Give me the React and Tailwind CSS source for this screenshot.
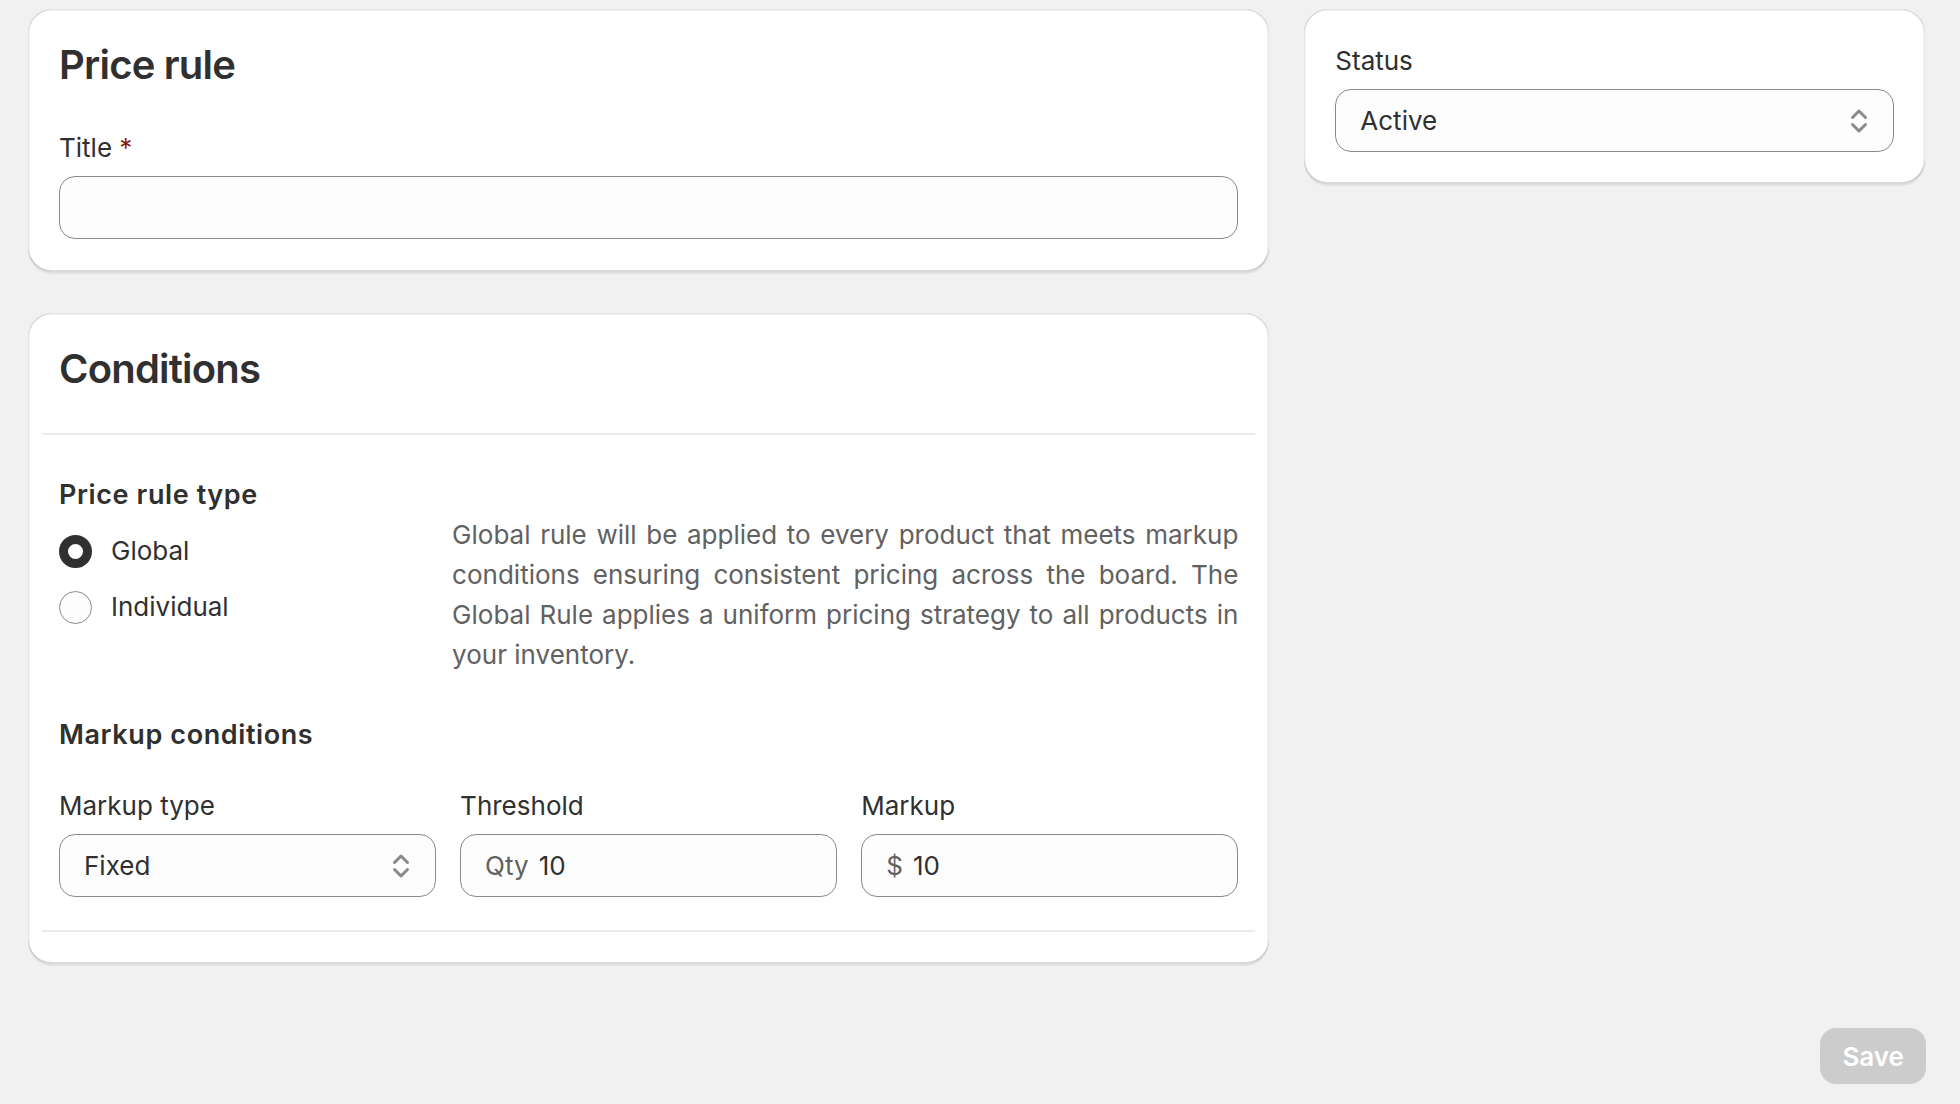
const cardShadow =
  'shadow-[0_2px_0_0_rgba(26,26,26,0.07),inset_1.5px_0_0_0_rgba(0,0,0,0.09),inset_-1.5px_0_0_0_rgba(0,0,0,0.09),inset_0_-2px_0_0_rgba(0,0,0,0.15),inset_0_1.5px_0_0_rgba(204,204,204,0.5)]';

function SelectIcon() {
  return (
    <svg viewBox="0 0 20 20" className="w-10 h-10" fill="none" stroke="#8a8a8a" strokeWidth="1.5" strokeLinecap="round" strokeLinejoin="round">
      <polyline points="6.75,8.25 10,5 13.25,8.25" />
      <polyline points="6.75,11.75 10,15 13.25,11.75" />
    </svg>
  );
}

function Select({ value }) {
  return (
    <div className="relative h-[63px] rounded-[16px] border-[1.5px] border-[#8a8a8a] bg-[#fdfdfd] flex items-center pl-6">
      <span className="text-[26px] leading-[40px]">{value}</span>
      <span className="absolute right-[14px] top-1/2 -translate-y-1/2">
        <SelectIcon />
      </span>
    </div>
  );
}

function TextField({ prefix, value }) {
  return (
    <div className="h-[63px] rounded-[16px] border-[1.5px] border-[#8a8a8a] bg-[#fdfdfd] flex items-center px-6">
      {prefix && <span className="text-[26px] leading-[40px] text-[#616161] mr-[10px]">{prefix}</span>}
      <span className="text-[26px] leading-[40px]">{value}</span>
    </div>
  );
}

function Radio({ checked, label }) {
  return (
    <div className="h-10 flex items-center gap-[19px]">
      {checked ? (
        <span className="w-[33px] h-[33px] rounded-full border-[9px] border-[#303030] bg-white" />
      ) : (
        <span className="w-[33px] h-[33px] rounded-full border-[1.5px] border-[#8a8a8a] bg-[#fdfdfd]" />
      )}
      <span className="text-[26px] leading-[40px]">{label}</span>
    </div>
  );
}

export default function App() {
  return (
    <div className="min-h-screen bg-[#f1f1f1] font-[Inter,sans-serif] text-[#303030]">
      <div className="flex gap-[35px] pl-[28px] pr-[35px] pt-[9px]">
        {/* main column */}
        <div className="flex-[2] min-w-0 flex flex-col gap-[41px]">
          {/* Price rule */}
          <div className={`rounded-[24px] bg-white px-[31px] pt-8 pb-[33px] ${cardShadow}`}>
            <h2 className="text-[40px] leading-[48px] font-semibold tracking-[-0.8px]">Price rule</h2>
            <div className="mt-[39px] text-[26px] leading-[40px]">
              Title <span className="text-[#8e1f0b]">*</span>
            </div>
            <div className="mt-2 h-[63px] rounded-[16px] border-[1.5px] border-[#8a8a8a] bg-[#fdfdfd]" />
          </div>

          {/* Conditions */}
          <div className={`rounded-[24px] bg-white pt-8 pb-8 ${cardShadow}`}>
            <h2 className="px-[31px] text-[40px] leading-[48px] font-semibold tracking-[-0.8px]">Conditions</h2>
            <div className="mx-[14px] mt-10 h-[2px] bg-[#ebebeb]" />

            <div className="px-[31px] pt-10">
              <div className="grid grid-cols-3">
                <div>
                  <div className="text-[27px] leading-[40px] font-semibold tracking-[0.6px]">Price rule type</div>
                  <div className="mt-4 flex flex-col gap-4">
                    <Radio checked label="Global" />
                    <Radio label="Individual" />
                  </div>
                </div>
                <p className="col-span-2 mt-10 text-[26px] leading-[40px] text-[#616161] text-justify">
                  Global rule will be applied to every product that meets markup conditions ensuring consistent pricing across the board. The Global Rule applies a uniform pricing strategy to all products in your inventory.
                </p>
              </div>

              <div className="mt-10 text-[27px] leading-[40px] font-semibold tracking-[0.6px]">Markup conditions</div>

              <div className="mt-[31px] grid grid-cols-3 gap-6">
                <div>
                  <div className="text-[26px] leading-[40px]">Markup type</div>
                  <div className="mt-2">
                    <Select value="Fixed" />
                  </div>
                </div>
                <div>
                  <div className="text-[26px] leading-[40px]">Threshold</div>
                  <div className="mt-2">
                    <TextField prefix="Qty" value="10" />
                  </div>
                </div>
                <div>
                  <div className="text-[26px] leading-[40px]">Markup</div>
                  <div className="mt-2">
                    <TextField prefix="$" value="10" />
                  </div>
                </div>
              </div>
            </div>

            <div className="mx-[14px] mt-[33px] h-[2px] bg-[#ebebeb]" />
          </div>
        </div>

        {/* side column */}
        <div className="flex-[1] min-w-0">
          <div className={`rounded-[24px] bg-white px-[31px] pt-8 pb-8 ${cardShadow}`}>
            <div className="text-[26px] leading-[40px]">Status</div>
            <div className="mt-2">
              <Select value="Active" />
            </div>
          </div>
        </div>
      </div>

      {/* footer */}
      <div className="mt-[64px] flex justify-end pr-[34px]">
        <button className="h-[56px] px-[22px] rounded-[16px] bg-[#cccccc] text-white text-[26px] font-semibold">
          Save
        </button>
      </div>
    </div>
  );
}
